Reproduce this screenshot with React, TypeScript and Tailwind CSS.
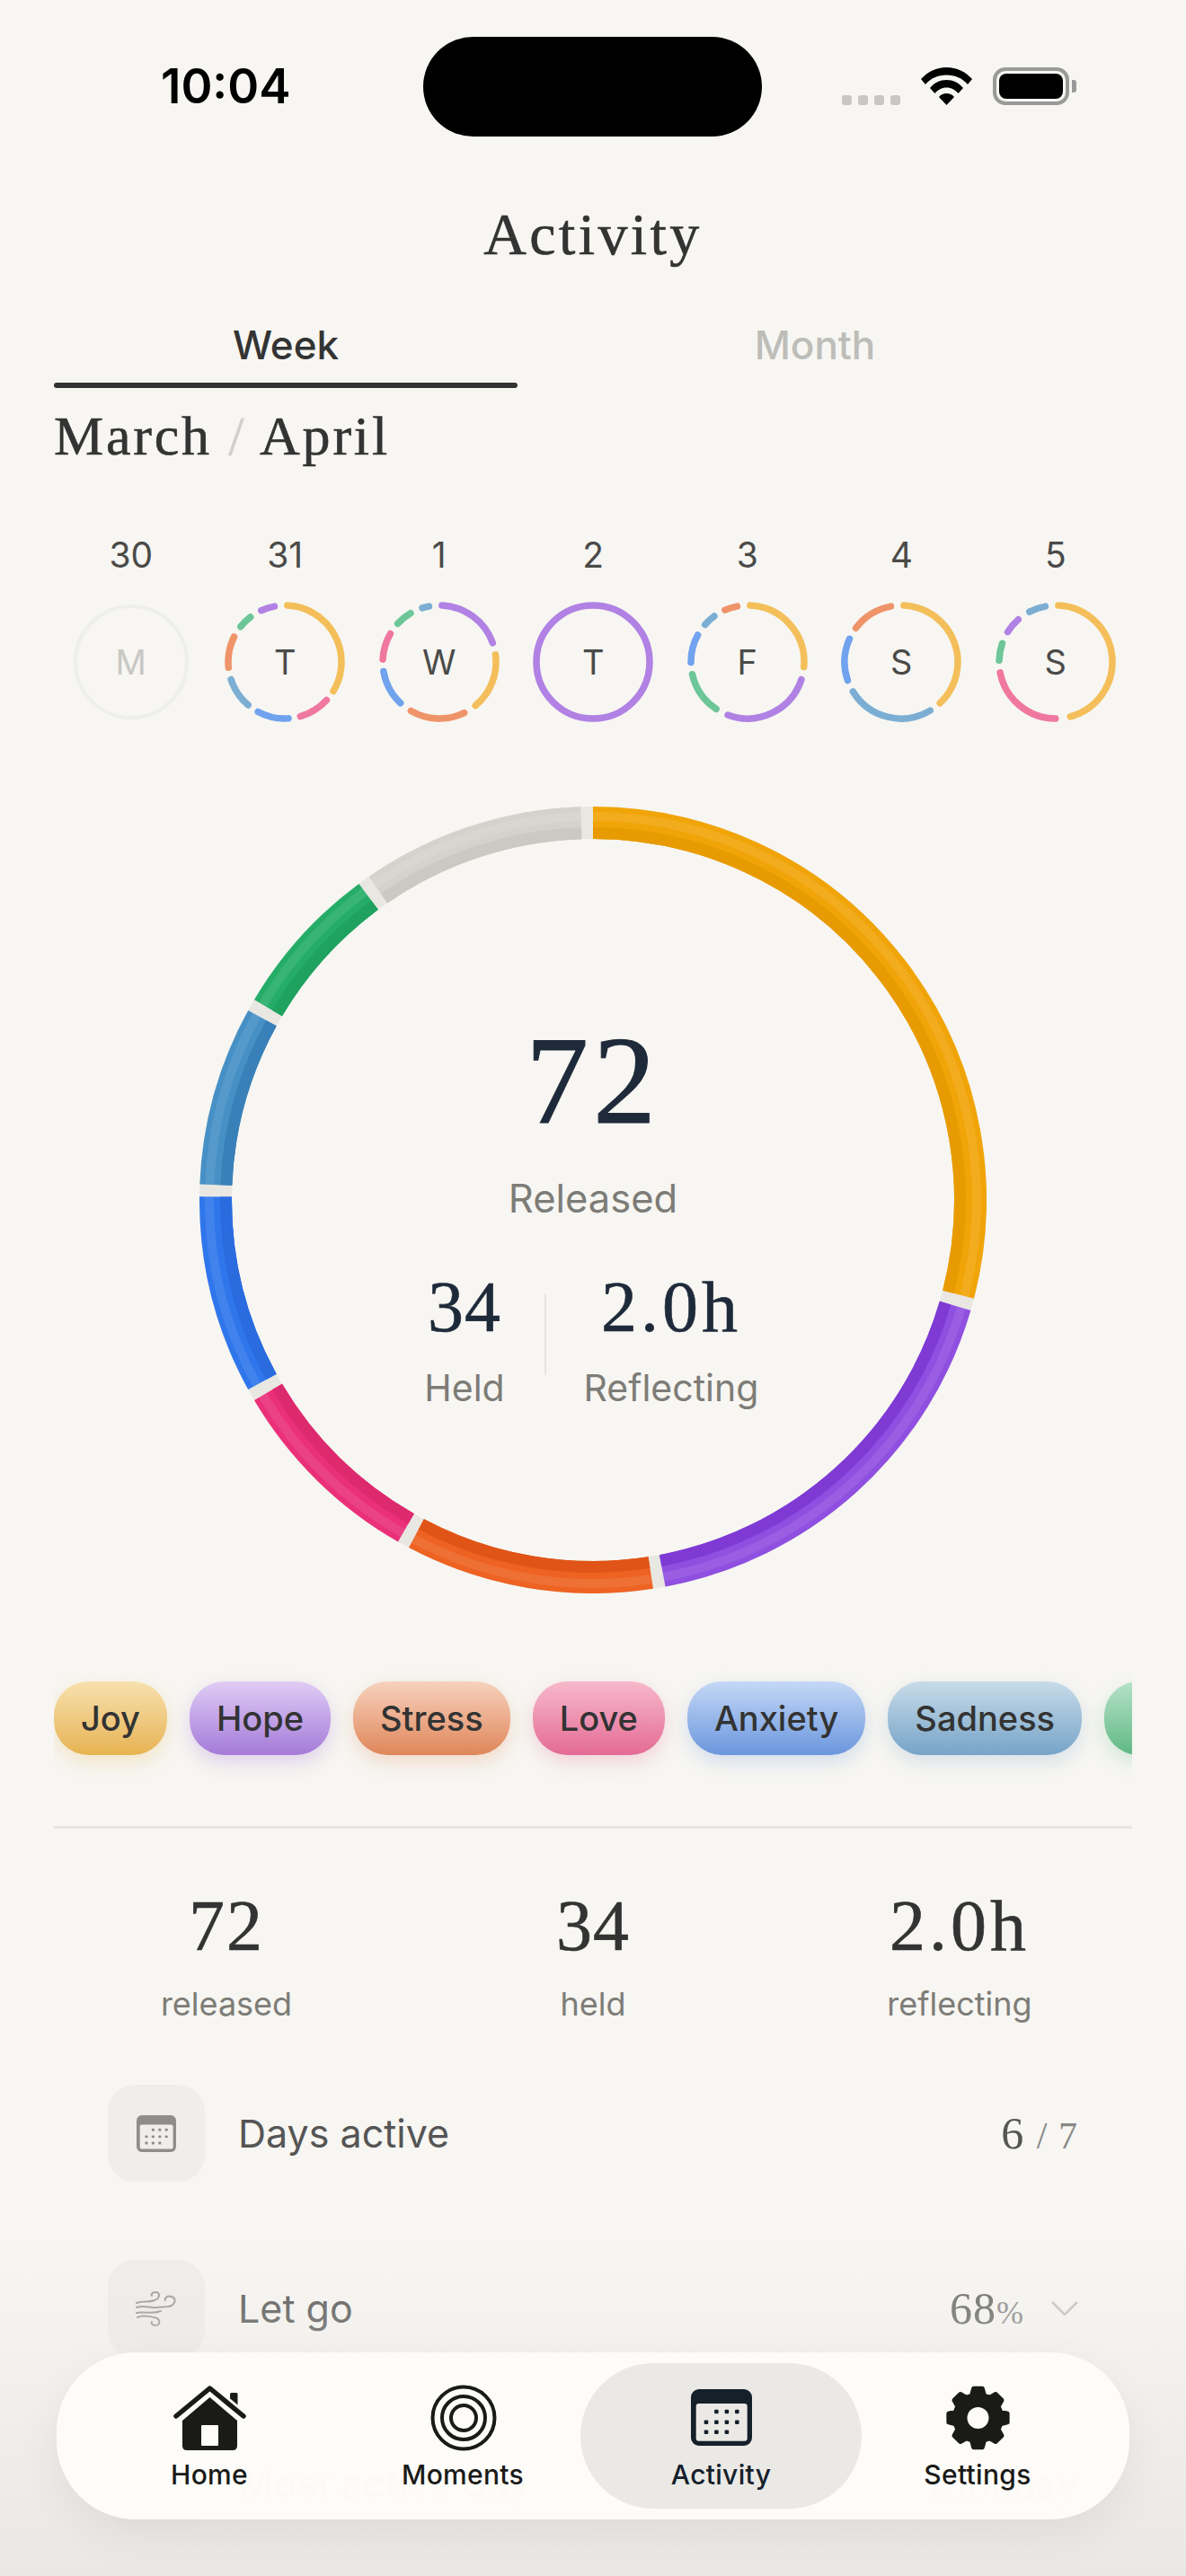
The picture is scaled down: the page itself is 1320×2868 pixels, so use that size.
import { Fragment } from 'react'

const colors = {
  yellow: '#f4bf5a',
  purple: '#b181e4',
  orange: '#ef9369',
  pink: '#f078a0',
  blue: '#70a2ee',
  steel: '#7caed4',
  green: '#6cc697',
}

type Arc = [string, number, number]

const days: { num: string; letter: string; arcs: Arc[] }[] = [
  { num: '30', letter: 'M', arcs: [] },
  {
    num: '31',
    letter: 'T',
    arcs: [
      [colors.yellow, 0, 123.7],
      [colors.pink, 129.9, 166.7],
      [colors.blue, 173.8, 210.9],
      [colors.steel, 217.8, 254.6],
      [colors.orange, 261.8, 299],
      [colors.green, 306, 325.2],
      [colors.purple, 332.8, 352],
    ],
  },
  {
    num: '1',
    letter: 'W',
    arcs: [
      [colors.purple, 0, 73],
      [colors.yellow, 80, 143],
      [colors.orange, 151.3, 212.7],
      [colors.blue, 220.8, 263],
      [colors.pink, 270, 302.6],
      [colors.green, 310, 332],
      [colors.steel, 339.8, 352],
    ],
  },
  { num: '2', letter: 'T', arcs: [[colors.purple, 0, 360]] },
  {
    num: '3',
    letter: 'F',
    arcs: [
      [colors.yellow, 0, 97.6],
      [colors.purple, 105.4, 203],
      [colors.green, 211, 260],
      [colors.blue, 267, 301],
      [colors.steel, 308.7, 326.6],
      [colors.orange, 334, 352],
    ],
  },
  {
    num: '4',
    letter: 'S',
    arcs: [
      [colors.yellow, 0, 139.3],
      [colors.steel, 146.6, 241],
      [colors.blue, 248.3, 296.7],
      [colors.orange, 304.2, 352],
    ],
  },
  {
    num: '5',
    letter: 'S',
    arcs: [
      [colors.yellow, 0, 167.7],
      [colors.pink, 177.6, 261.7],
      [colors.green, 269, 291.7],
      [colors.purple, 299.4, 321.2],
      [colors.steel, 329.8, 352],
    ],
  },
]

const donut = [
  { from: 0, to: 104.5, base: '#f1a408', inner: '#e89b00' },
  { from: 106.3, to: 169.4, base: '#8f4fe0', inner: '#7f3ad4' },
  { from: 171.2, to: 207.9, base: '#ee6222', inner: '#e05517' },
  { from: 209.7, to: 239.4, base: '#ea3079', inner: '#dd2a6e' },
  { from: 241.2, to: 270.5, base: '#2f76ec', inner: '#2a6be0' },
  { from: 272.3, to: 298.8, base: '#4690c6', inner: '#3a80b8' },
  { from: 300.6, to: 323.5, base: '#25ad68', inner: '#1fa25f' },
  { from: 325.3, to: 358.2, base: '#d4d2cc', inner: '#cbc9c2' },
]

const pills = [
  { label: 'Joy', cls: 'from-[#f8e1ae] to-[#e6b350] shadow-[0_8px_20px_rgba(230,179,80,0.25)]' },
  { label: 'Hope', cls: 'from-[#e0ccf4] to-[#a57ad8] shadow-[0_8px_20px_rgba(165,122,216,0.3)]' },
  { label: 'Stress', cls: 'from-[#f6d2bd] to-[#df8659] shadow-[0_8px_20px_rgba(223,134,89,0.25)]' },
  { label: 'Love', cls: 'from-[#f6b8cc] to-[#e36a95] shadow-[0_8px_20px_rgba(227,106,149,0.25)]' },
  { label: 'Anxiety', cls: 'from-[#c5d8f5] to-[#6b96dd] shadow-[0_8px_20px_rgba(107,150,221,0.25)]' },
  { label: 'Sadness', cls: 'from-[#c8dbe8] to-[#76a4c8] shadow-[0_8px_20px_rgba(118,164,200,0.25)]' },
  { label: 'Calm', cls: 'from-[#b5e2c8] to-[#5fb886] shadow-[0_8px_20px_rgba(95,184,134,0.25)]' },
]

function arcPath(cx: number, cy: number, r: number, a0: number, a1: number) {
  const rad = (a: number) => ((a - 90) * Math.PI) / 180
  const x0 = cx + r * Math.cos(rad(a0))
  const y0 = cy + r * Math.sin(rad(a0))
  const x1 = cx + r * Math.cos(rad(a1))
  const y1 = cy + r * Math.sin(rad(a1))
  return `M${x0} ${y0}A${r} ${r} 0 ${a1 - a0 > 180 ? 1 : 0} 1 ${x1} ${y1}`
}

function gearPath() {
  const pts: string[] = []
  const teeth = 8
  for (let i = 0; i < teeth; i++) {
    const c = (i * 360) / teeth - 90
    const seq: [number, number][] = [
      [c - 15.5, 26],
      [c - 8.5, 33],
      [c + 8.5, 33],
      [c + 15.5, 26],
    ]
    seq.forEach(([a, r]) => {
      const t = (a * Math.PI) / 180
      pts.push(`${36.5 + r * Math.cos(t)} ${36 + r * Math.sin(t)}`)
    })
  }
  return `M${pts.join('L')}Z`
}

function DayRing({ arcs }: { arcs: Arc[] }) {
  if (arcs.length === 1) {
    return (
      <svg viewBox="0 0 134 134" className="absolute inset-0 h-full w-full">
        <circle cx="67" cy="67" r="63" fill="none" stroke={arcs[0][0]} strokeWidth="7.5" />
      </svg>
    )
  }
  return (
    <svg viewBox="0 0 134 134" className="absolute inset-0 h-full w-full">
      {arcs.map(([color, a0, a1]) => (
        <path
          key={a0}
          d={arcPath(67, 67, 63, a0 + 2.6, a1 - 2.6)}
          fill="none"
          stroke={color}
          strokeWidth="7.5"
          strokeLinecap="round"
        />
      ))}
    </svg>
  )
}

function CalendarIcon({ dark, light, className }: { dark: string; light: string; className: string }) {
  const rows = [
    { y: 25, xs: [28.4, 39.9, 51.3] },
    { y: 36.7, xs: [17, 28.4, 39.9, 51.3] },
    { y: 47.7, xs: [17, 28.4, 39.9] },
  ]
  return (
    <svg viewBox="0 0 68 63" className={className}>
      <rect width="68" height="63" rx="9" fill={dark} />
      <rect x="5.7" y="16" width="57" height="41.7" rx="3" fill={light} />
      {rows.map((row) =>
        row.xs.map((x) => (
          <rect key={`${row.y}-${x}`} x={x - 2.3} y={row.y - 2.3} width="4.6" height="4.6" rx="1.2" fill={dark} />
        ))
      )}
    </svg>
  )
}

function WindIcon() {
  return (
    <svg viewBox="0 0 46 39" className="h-[39px] w-[46px]" fill="none" stroke="#9a9995" strokeWidth="2" strokeLinecap="round">
      <path d="M1 13C8 10 14 13 21 10C27 8 28 1 22 1C18 1 17 4 18 5" />
      <path d="M1 18C10 15 16 19 24 18L36 17C44 16 46 8 40 6C35 4 32 8 33 10" />
      <path d="M1 24C10 22 18 26 28 22" />
      <path d="M2 29C8 26 14 28 21 29C28 31 28 38 22 38C18 38 17 35 18 34" />
    </svg>
  )
}

function NavItem({ label, width, active, children }: { label: string; width: string; active?: boolean; children: React.ReactNode }) {
  return (
    <div className={`flex h-[162px] flex-col items-center pt-[24px] ${width} ${active ? 'rounded-full bg-[#eae9e5] text-[#15202b]' : 'text-[#1a1a18]'}`}>
      <div className="flex h-[73px] items-center justify-center">{children}</div>
      <span className="mt-[12px] text-[30px] font-medium leading-none tracking-[0.3px]">{label}</span>
    </div>
  )
}

export default function App() {
  return (
    <div className="relative h-[2868px] w-[1320px] overflow-hidden bg-[#f7f6f2] font-['Inter',sans-serif]">
      {/* Status bar */}
      <div className="flex h-[152px] items-start pt-[41px]">
        <div className="flex h-[111px] w-[471px] items-center pl-[179px] text-[53px] font-semibold leading-none text-black">
          10:04
        </div>
        <div className="h-[111px] w-[377px] rounded-full bg-black" />
        <div className="flex h-[76px] items-end pl-[89px]">
          <div className="flex gap-[7px] pr-[23px]">
            {[0, 1, 2, 3].map((i) => (
              <div key={i} className="h-[11px] w-[11px] rounded-[3px] bg-[#c8c7c4]" />
            ))}
          </div>
          <svg viewBox="0 0 57 42" className="h-[42px] w-[57px]" fill="#000">
            <path d="M28.5 0C17 0 7.5 5 0 13L5 19C11 12 19 8.5 28.5 8.5C38 8.5 46 12 52 19L57 13C49.5 5 40 0 28.5 0Z" />
            <path d="M28.5 14C21 14 15 17 10 23L15.5 29C19 25 23 22.5 28.5 22.5C34 22.5 38 25 41.5 29L47 23C42 17 36 14 28.5 14Z" />
            <path d="M28.5 29C25 29 22.5 30 20 33L28.5 42L37 33C34.5 30 32 29 28.5 29Z" />
          </svg>
          <div className="ml-[23px] flex items-center">
            <div className="h-[42px] w-[85px] rounded-[14px] border-[4px] border-[#999] p-[3px]">
              <div className="h-full w-full rounded-[8px] bg-black" />
            </div>
            <div className="ml-[3px] h-[14px] w-[5px] rounded-r-[3px] bg-[#999]" />
          </div>
        </div>
      </div>

      <h1 className="mt-[76px] text-center font-['Liberation_Serif',serif] text-[66px] font-normal leading-none tracking-[3.4px] text-[#333] [-webkit-text-stroke:0.6px]">
        Activity
      </h1>

      {/* Tabs */}
      <div className="mx-[60px] mt-[68px] flex text-[44px] font-medium leading-none">
        <div className="w-[516px]">
          <div className="text-center text-[#333]">Week</div>
          <div className="mt-[20px] h-[6px] rounded-full bg-[#333]" />
        </div>
        <div className="flex-1 pr-[22px] text-center text-[#bdbdb9]">Month</div>
      </div>

      <div className="mx-[60px] mt-[22px] font-['Liberation_Serif',serif] text-[62px] leading-none tracking-[2.8px] text-[#333] [-webkit-text-stroke:0.6px]">
        March <span className="text-[#d0cfcb]">/</span> April
      </div>

      {/* Days */}
      <div className="mt-[82px] flex pl-[60px]">
        {days.map((day, i) => (
          <div key={day.num} className="flex w-[171.5px] flex-col items-center">
            <span className="text-[39px] leading-none text-[#4a4a48]">{day.num}</span>
            <div className="relative mt-[33px] flex h-[134px] w-[134px] items-center justify-center">
              {i === 0 ? (
                <div className="h-[128px] w-[128px] rounded-full border-[4px] border-[#eeeeeb]" />
              ) : (
                <DayRing arcs={day.arcs} />
              )}
              <span className={`absolute text-[38px] leading-none ${i === 0 ? 'text-[#c8c7c4]' : 'text-[#4a4a48]'}`}>{day.letter}</span>
            </div>
          </div>
        ))}
      </div>

      {/* Donut */}
      <div className="relative mx-auto mt-[94px] h-[876px] w-[876px] pt-[235px]">
        <svg viewBox="0 0 876 876" className="absolute inset-0 h-full w-full" fill="none">
          <circle cx="438" cy="438" r="420" stroke="#e9e7e2" strokeWidth="36" />
          {donut.map((seg) => (
            <Fragment key={seg.from}>
              <path d={arcPath(438, 438, 420, seg.from, seg.to)} stroke={seg.base} strokeWidth="36" />
              <path d={arcPath(438, 438, 408.5, seg.from, seg.to)} stroke={seg.inner} strokeWidth="13" />
              <path d={arcPath(438, 438, 427, seg.from, seg.to)} stroke="#ffffff" strokeOpacity="0.09" strokeWidth="10" />
            </Fragment>
          ))}
        </svg>
        <div className="relative flex flex-col items-center">
          <div className="font-['Liberation_Serif',serif] text-[140px] leading-none tracking-[5px] text-[#1e2a3a] [-webkit-text-stroke:1px]">72</div>
          <div className="mt-[40px] text-[43.5px] leading-none text-[#7d7c77]">Released</div>
          <div className="mt-[58px] flex w-full pl-[206px]">
            <div className="flex w-[178px] flex-col items-center">
              <div className="font-['Liberation_Serif',serif] text-[80px] leading-none tracking-[1px] text-[#1e2a3a] [-webkit-text-stroke:0.6px]">34</div>
              <div className="mt-[30px] text-[41px] leading-none text-[#7d7c77]">Held</div>
            </div>
            <div className="mt-[26px] h-[90px] w-[2px] bg-[#e6e5e1]" />
            <div className="flex w-[278px] flex-col items-center">
              <div className="font-['Liberation_Serif',serif] text-[80px] leading-none tracking-[4px] text-[#1e2a3a] [-webkit-text-stroke:0.6px]">2.0h</div>
              <div className="mt-[30px] text-[41px] leading-none text-[#7d7c77]">Reflecting</div>
            </div>
          </div>
        </div>
      </div>

      {/* Emotion pills */}
      <div className="mx-[60px] mt-[68px] flex gap-[25px] overflow-hidden py-[30px]">
        {pills.map((p) => (
          <div
            key={p.label}
            className={`flex h-[82px] shrink-0 items-center rounded-[38px] bg-gradient-to-b px-[30px] text-[38px] font-medium leading-none text-[#333] ${p.cls}`}
          >
            {p.label}
          </div>
        ))}
      </div>

      <div className="mx-[60px] mt-[49px] h-[3px] bg-[#e6e5e1]" />

      {/* Totals */}
      <div className="mx-[48px] mt-[68px] grid grid-cols-3 text-center">
        {[
          ['72', 'released', 'tracking-[2px]'],
          ['34', 'held', 'tracking-[1px]'],
          ['2.0h', 'reflecting', 'tracking-[4px]'],
        ].map(([value, label, track]) => (
          <div key={label}>
            <div className={`font-['Liberation_Serif',serif] text-[80px] leading-none text-[#333] [-webkit-text-stroke:0.6px] ${track}`}>{value}</div>
            <div className="mt-[29px] text-[36px] leading-none text-[#7d7c77]">{label}</div>
          </div>
        ))}
      </div>

      {/* Rows */}
      <div className="mt-[72px] flex flex-col gap-[87px] pl-[120px] pr-[120px]">
        <div className="flex h-[108px] items-center">
          <div className="flex h-[108px] w-[108px] items-center justify-center rounded-[30px] bg-[#efeeeb]">
            <CalendarIcon dark="#8e8d89" light="#efeeeb" className="h-[41px] w-[44px]" />
          </div>
          <span className="ml-[37px] flex-1 text-[43px] leading-none text-[#555]">Days active</span>
          <span className="font-['Liberation_Serif',serif] text-[50px] leading-none tracking-[1px] text-[#555]">
            6 <span className="text-[42px] text-[#888]">/ 7</span>
          </span>
        </div>
        <div className="flex h-[108px] items-center">
          <div className="flex h-[108px] w-[108px] items-center justify-center rounded-[30px] bg-[#efeeeb]">
            <WindIcon />
          </div>
          <span className="ml-[37px] flex-1 text-[43px] leading-none text-[#555]">Let go</span>
          <span className="font-['Liberation_Serif',serif] text-[50px] leading-none tracking-[1px] text-[#666]">
            68<span className="text-[36px] text-[#888]">%</span>
          </span>
          <svg viewBox="0 0 30 16" className="ml-[30px] h-[16px] w-[30px]" fill="none" stroke="#c4c3bf" strokeWidth="2.5">
            <path d="M1 1L15 15L29 1" />
          </svg>
        </div>
        <div className="flex h-[108px] items-center">
          <div className="h-[108px] w-[108px] rounded-[30px] bg-[#efeeeb]" />
          <span className="ml-[37px] flex-1 text-[43px] font-medium leading-none text-[#555]">Most active day</span>
          <span className="font-['Liberation_Serif',serif] text-[50px] leading-none text-[#555]">Monday</span>
        </div>
      </div>

      {/* Bottom fade behind the tab bar */}
      <div className="pointer-events-none absolute inset-x-0 bottom-0 h-[380px] bg-gradient-to-b from-[#f7f6f2]/0 to-[#e9e8e4]" />

      {/* Tab bar */}
      <div className="absolute left-[63px] top-[2619px] flex h-[186px] w-[1194px] items-start rounded-[88px] bg-[#fdfcf9]/[0.97] pl-[27px] pt-[12px] shadow-[0_18px_50px_rgba(0,0,0,0.06)]">
        <NavItem label="Home" width="w-[286px]">
          <svg viewBox="0 0 81 72" className="h-[72px] w-[81px]">
            <rect x="63" y="8" width="8.5" height="18" rx="1.5" fill="#1a1a18" />
            <path d="M40.5 13L71 39V67Q71 72 66 72H15Q10 72 10 67V39Z" fill="#1a1a18" />
            <rect x="31" y="44" width="19" height="23" rx="1" fill="#fdfcf9" />
            <path d="M3 34L40.5 3L78 34" fill="none" stroke="#fdfcf9" strokeWidth="11" strokeLinecap="round" strokeLinejoin="round" />
            <path d="M3 34L40.5 3L78 34" fill="none" stroke="#1a1a18" strokeWidth="5.5" strokeLinecap="round" strokeLinejoin="round" />
          </svg>
        </NavItem>
        <div className="w-[8px]" />
        <NavItem label="Moments" width="w-[262px]">
          <svg viewBox="0 0 74 74" className="ml-[2px] h-[74px] w-[74px]" fill="none" stroke="#1a1a18" strokeWidth="4">
            <circle cx="37" cy="37" r="34.5" />
            <circle cx="37" cy="37" r="24" />
            <circle cx="37" cy="37" r="14" />
          </svg>
        </NavItem>
        <NavItem label="Activity" width="w-[313px]" active>
          <CalendarIcon dark="#15202b" light="#eae9e5" className="h-[63px] w-[68px]" />
        </NavItem>
        <NavItem label="Settings" width="w-[258px]">
          <svg viewBox="0 0 73 72" className="h-[72px] w-[73px]">
            <path d={gearPath()} fill="#1a1a18" stroke="#1a1a18" strokeWidth="5" strokeLinejoin="round" />
            <circle cx="36.5" cy="36" r="12" fill="#fdfcf9" />
          </svg>
        </NavItem>
      </div>
    </div>
  )
}
